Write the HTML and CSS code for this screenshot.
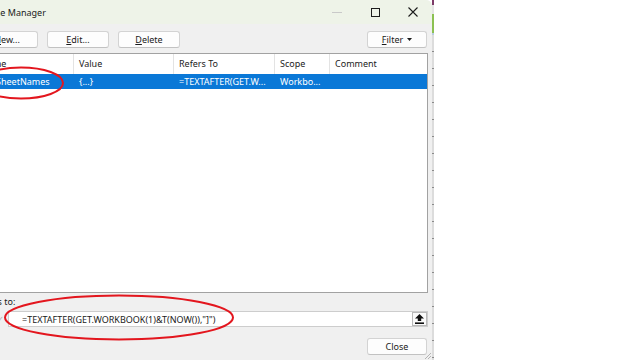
FILE: index.html
```html
<!DOCTYPE html>
<html lang="en">
<head>
    <meta charset="UTF-8">
    <title>Name Manager</title>
    <link rel="stylesheet" href="styles.css">
</head>
<body>
    <div class="screen">
        <div class="dialog">
            <div class="titlebar">
                <span class="title">Name Manager</span>
                <div class="controls">
                    <span class="ctl"><svg width="10" height="1" viewBox="0 0 10 1"><rect width="10" height="1" fill="#c9c9c9"/></svg></span>
                    <span class="ctl"><svg width="9" height="9" viewBox="0 0 9 9"><rect x="0.5" y="0.5" width="8" height="8" fill="none" stroke="#1c1c1c"/></svg></span>
                    <span class="ctl"><svg width="10" height="10" viewBox="0 0 10 10"><path d="M0.5 0.5 L9.5 9.5 M9.5 0.5 L0.5 9.5" stroke="#1c1c1c" stroke-width="1.1"/></svg></span>
                </div>
            </div>

            <div class="content">
                <div class="toolbar">
                    <button class="btn"><span><u>N</u>ew...</span></button>
                    <button class="btn"><span><u>E</u>dit...</span></button>
                    <button class="btn"><span><u>D</u>elete</span></button>
                    <button class="btn filter"><span><u>F</u>ilter</span>
                        <svg width="5" height="3" viewBox="0 0 5 3"><path d="M0 0 H5 L2.5 3 Z" fill="#1b1b1b"/></svg>
                    </button>
                </div>

                <div class="names">
                    <div class="names-head">
                        <div class="cell">Name</div>
                        <div class="cell">Value</div>
                        <div class="cell">Refers To</div>
                        <div class="cell">Scope</div>
                        <div class="cell">Comment</div>
                    </div>
                    <div class="names-row selected">
                        <div class="cell name">SheetNames</div>
                        <div class="cell">{...}</div>
                        <div class="cell">=TEXTAFTER(GET.W...</div>
                        <div class="cell">Workbo...</div>
                        <div class="cell"></div>
                    </div>
                </div>

                <div class="refers-label">Refers to:</div>
                <div class="refers">
                    <span class="edit-icons"><span>✗</span><span>✓</span></span>
                    <div class="ref-field">
                        <span class="ref-text">=TEXTAFTER(GET.WORKBOOK(1)&amp;T(NOW()),"]")</span>
                        <span class="collapse">
                            <svg width="9" height="10" viewBox="0 0 9 10"><path d="M4.5 0 L9 4.5 H6.2 V7 H2.8 V4.5 H0 Z" fill="#111"/><rect y="8.4" width="9" height="1.6" fill="#111"/></svg>
                        </span>
                    </div>
                </div>

                <div class="footer">
                    <button class="btn close"><span>Close</span></button>
                </div>
            </div>

            <svg class="grip" width="7" height="7" viewBox="0 0 7 7"><path d="M7 1 L1 7 M7 4 L4 7" stroke="#b4b4b4"/></svg>
        </div>
        <div class="sheet-edge"></div>
    </div>

    <!-- red marks drawn over the screenshot -->
    <svg class="marks" width="640" height="360" viewBox="0 0 640 360">
        <ellipse cx="21" cy="83" rx="42" ry="15.5" fill="none" stroke="#e3161e" stroke-width="2"/>
        <ellipse cx="119" cy="317.5" rx="114" ry="22" fill="none" stroke="#e3161e" stroke-width="2"/>
    </svg>
</body>
</html>
```

FILE: styles.css
```css
body {
    margin: 0;
    width: 640px;
    height: 360px;
    overflow: hidden;
    position: relative;
    background-color: #fff;
    font-family: "Noto Sans", sans-serif;
    font-size: 9px;
    color: #1b1b1b;
}
.screen {
    display: flex;
    height: 360px;
}
.dialog {
    position: relative;
    flex: none;
    width: 467px;
    margin-left: -35px;
    background-color: #f0f0f0;
    display: flex;
    flex-direction: column;
    border-top-right-radius: 6px;
    overflow: hidden;
}
.titlebar {
    flex: none;
    height: 24px;
    display: flex;
    align-items: center;
    background-color: #eef3e8;
    padding-left: 15px;
}
.title {
    flex: 1;
}
.controls {
    display: flex;
    align-self: stretch;
}
.ctl {
    width: 38px;
    display: flex;
    align-items: center;
    justify-content: center;
}
.content {
    flex: 1;
    display: flex;
    flex-direction: column;
    padding: 7px 4px 0 10px;
}
.toolbar {
    display: flex;
    gap: 9px;
    height: 17px;
    padding-left: 1px;
}
.btn {
    width: 62px;
    height: 17px;
    padding: 0;
    box-sizing: border-box;
    background-color: #fdfdfd;
    border: 1px solid #d3d3d3;
    border-bottom-color: #c2c2c2;
    border-radius: 3px;
    font: inherit;
    color: #1b1b1b;
    display: flex;
    align-items: center;
    justify-content: center;
    gap: 4px;
}
.btn.filter {
    margin-left: auto;
    margin-right: 1px;
    width: 60px;
}
.names {
    margin-top: 5px;
    height: 240px;
    box-sizing: border-box;
    background-color: #fff;
    border: 1px solid #a2a2a2;
}
.names-head,
.names-row {
    display: grid;
    grid-template-columns: 98px 100px 101px 55px 1fr;
}
.names-head {
    height: 20px;
    line-height: 20px;
}
.names-head .cell {
    border-right: 1px solid #e3e3e3;
    padding-left: 5px;
}
.names-head .cell:last-child {
    border-right: none;
}
.names-row {
    height: 15px;
    line-height: 15px;
}
.names-row .cell {
    padding-left: 5px;
    white-space: nowrap;
    overflow: hidden;
}
.names-row .cell.name {
    padding-left: 20px;
}
.names-row.selected {
    background-color: #0a78d7;
    color: #fff;
}
.refers-label {
    margin-top: 3px;
    line-height: 12px;
}
.refers {
    margin-top: 3px;
    display: flex;
    height: 16px;
}
.edit-icons {
    width: 33px;
    display: flex;
    align-items: center;
    justify-content: space-around;
    color: #b8b8b8;
    font-size: 10px;
}
.ref-field {
    flex: 1;
    display: flex;
    align-items: center;
    box-sizing: border-box;
    background-color: #fff;
    border: 1px solid #cdcdcd;
    padding-left: 13px;
}
.ref-text {
    flex: 1;
    white-space: nowrap;
}
.collapse {
    width: 15px;
    height: 14px;
    box-sizing: border-box;
    border: 1px solid #b9b9b9;
    background-color: #fafafa;
    display: flex;
    align-items: center;
    justify-content: center;
}
.footer {
    margin-top: 11px;
    display: flex;
    justify-content: flex-end;
}
.btn.close {
    width: 60px;
    margin-right: 1px;
}
.grip {
    position: absolute;
    right: 1px;
    bottom: 1px;
}
.sheet-edge {
    flex: none;
    width: 2px;
    height: 360px;
    background:
        linear-gradient(to bottom, #7d3b68 0 5px, #e4e4e4 5px 14px, #8cc152 14px 33px, #b8cde0 33px 35px, transparent 35px),
        repeating-linear-gradient(to bottom, #8a8a8a 0 1px, #dcdcdc 1px 17px);
}
.marks {
    position: absolute;
    left: 0;
    top: 0;
    pointer-events: none;
}
```
